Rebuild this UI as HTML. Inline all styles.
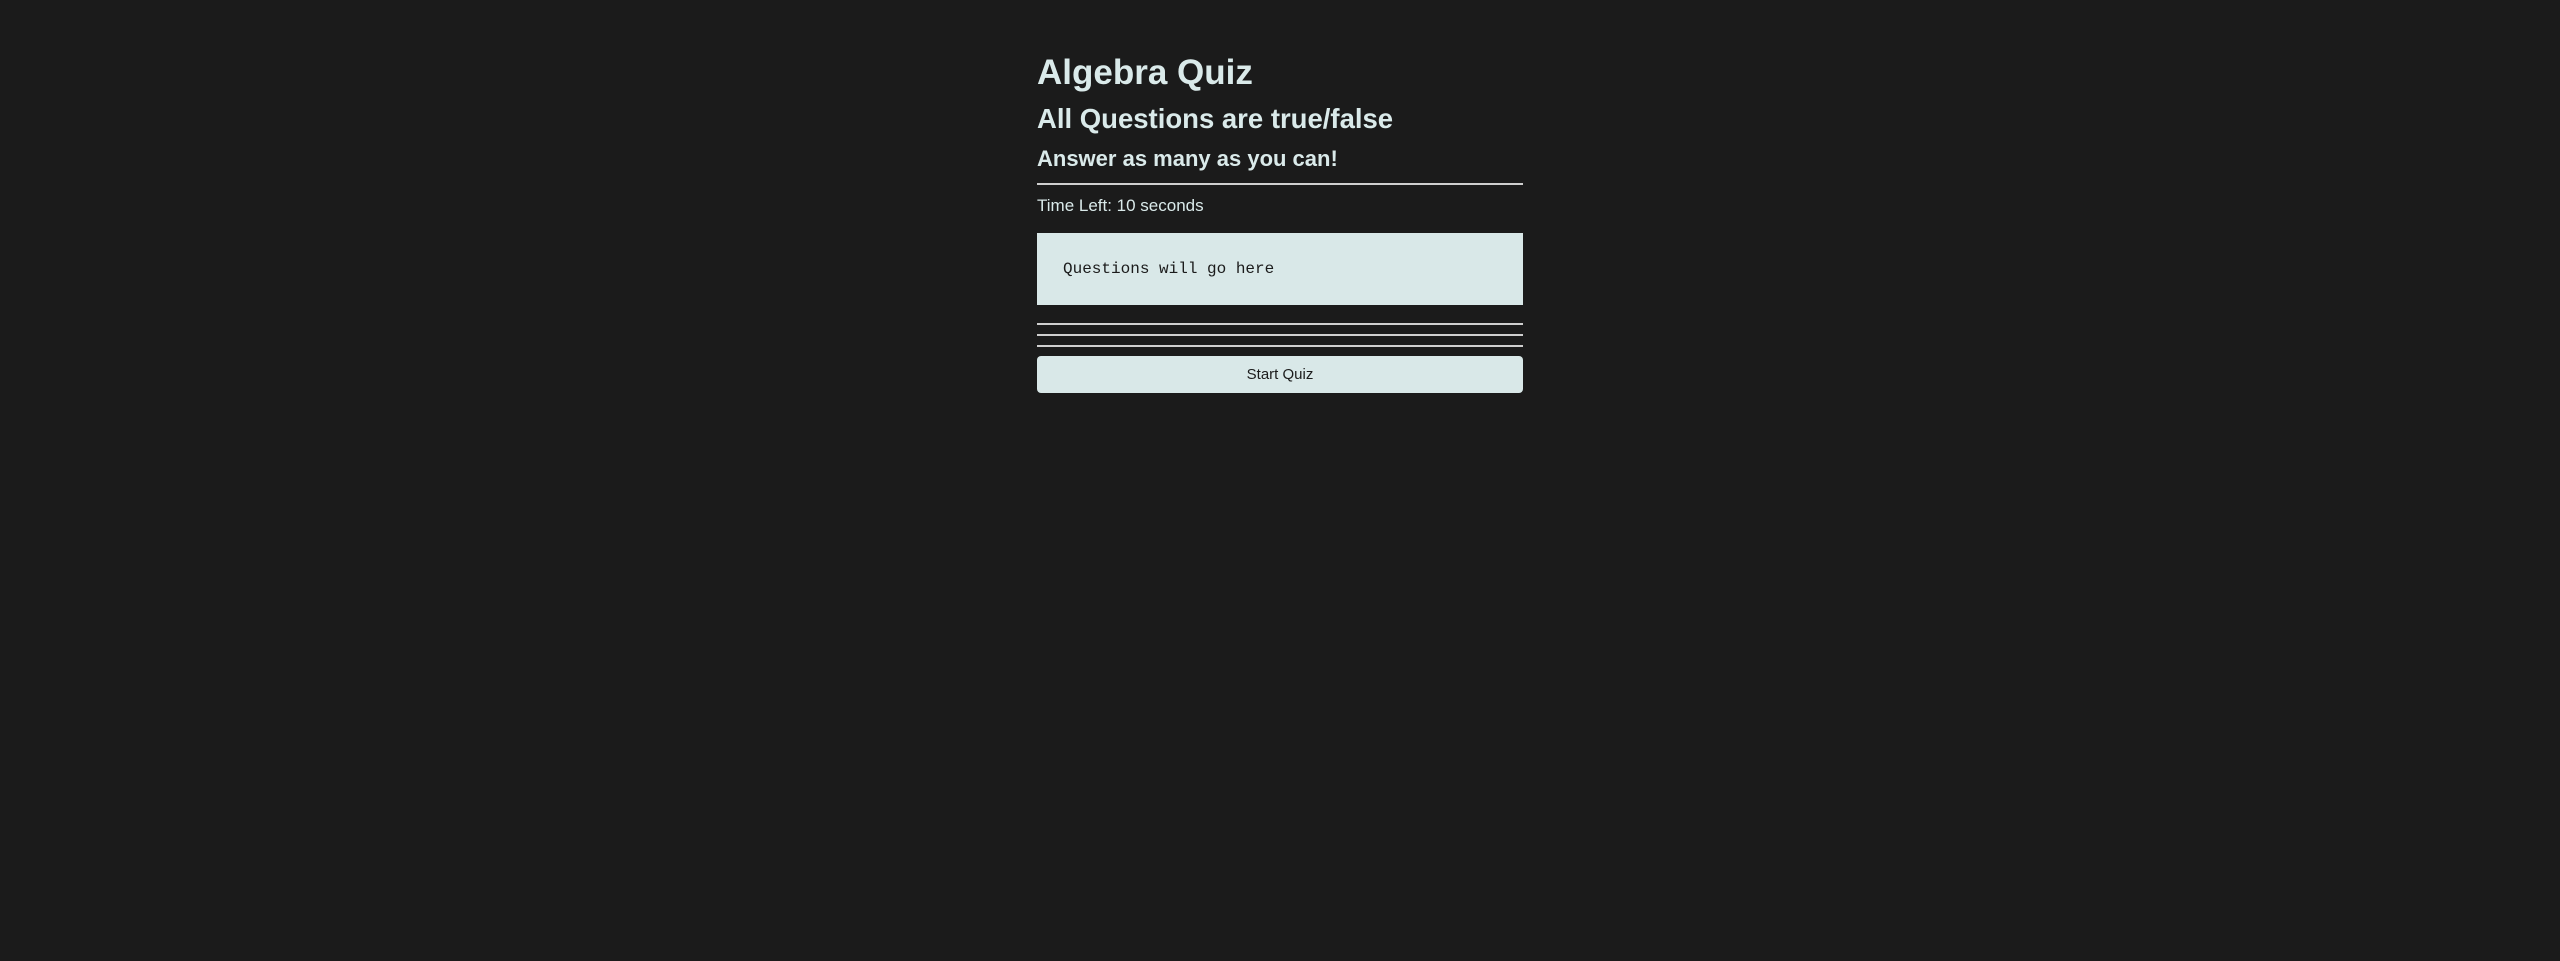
<!DOCTYPE html>
<html><head><meta charset="utf-8"><style>
html,body{margin:0;padding:0;background:#1b1b1b;width:2560px;height:961px;overflow:hidden}
body{font-family:"Liberation Sans",sans-serif;color:#daeaea}
.w{position:absolute;left:1037px;width:486px;top:0}
.a{position:absolute;white-space:nowrap;font-weight:bold}
.hr{position:absolute;left:0;width:486px;height:2px;background:#cfcfcf}
</style></head><body><div class="w">
<div class="a" style="top:51px;font-size:35px;line-height:44px">Algebra Quiz</div>
<div class="a" style="top:103px;font-size:27.5px;line-height:32px">All Questions are true/false</div>
<div class="a" style="top:146px;font-size:22px;line-height:26px">Answer as many as you can!</div>
<div class="hr" style="top:183px"></div>
<div class="a" style="top:195px;font-size:17px;line-height:22px;font-weight:normal">Time Left: 10 seconds</div>
<div style="position:absolute;top:233px;left:0;width:486px;height:72px;background:#d9e8e8"></div>
<div class="a" style="top:259px;left:26px;font-family:'Liberation Mono',monospace;font-size:16px;line-height:20px;font-weight:normal;color:#1b1b1b">Questions will go here</div>
<div class="hr" style="top:323px"></div>
<div class="hr" style="top:334px"></div>
<div class="hr" style="top:345px"></div>
<div style="position:absolute;top:356px;left:0;width:486px;height:37px;background:#d9e8e8;border-radius:4px;color:#1b1b1b;font-size:15px;line-height:37px;text-align:center">Start Quiz</div>
</div></body></html>
